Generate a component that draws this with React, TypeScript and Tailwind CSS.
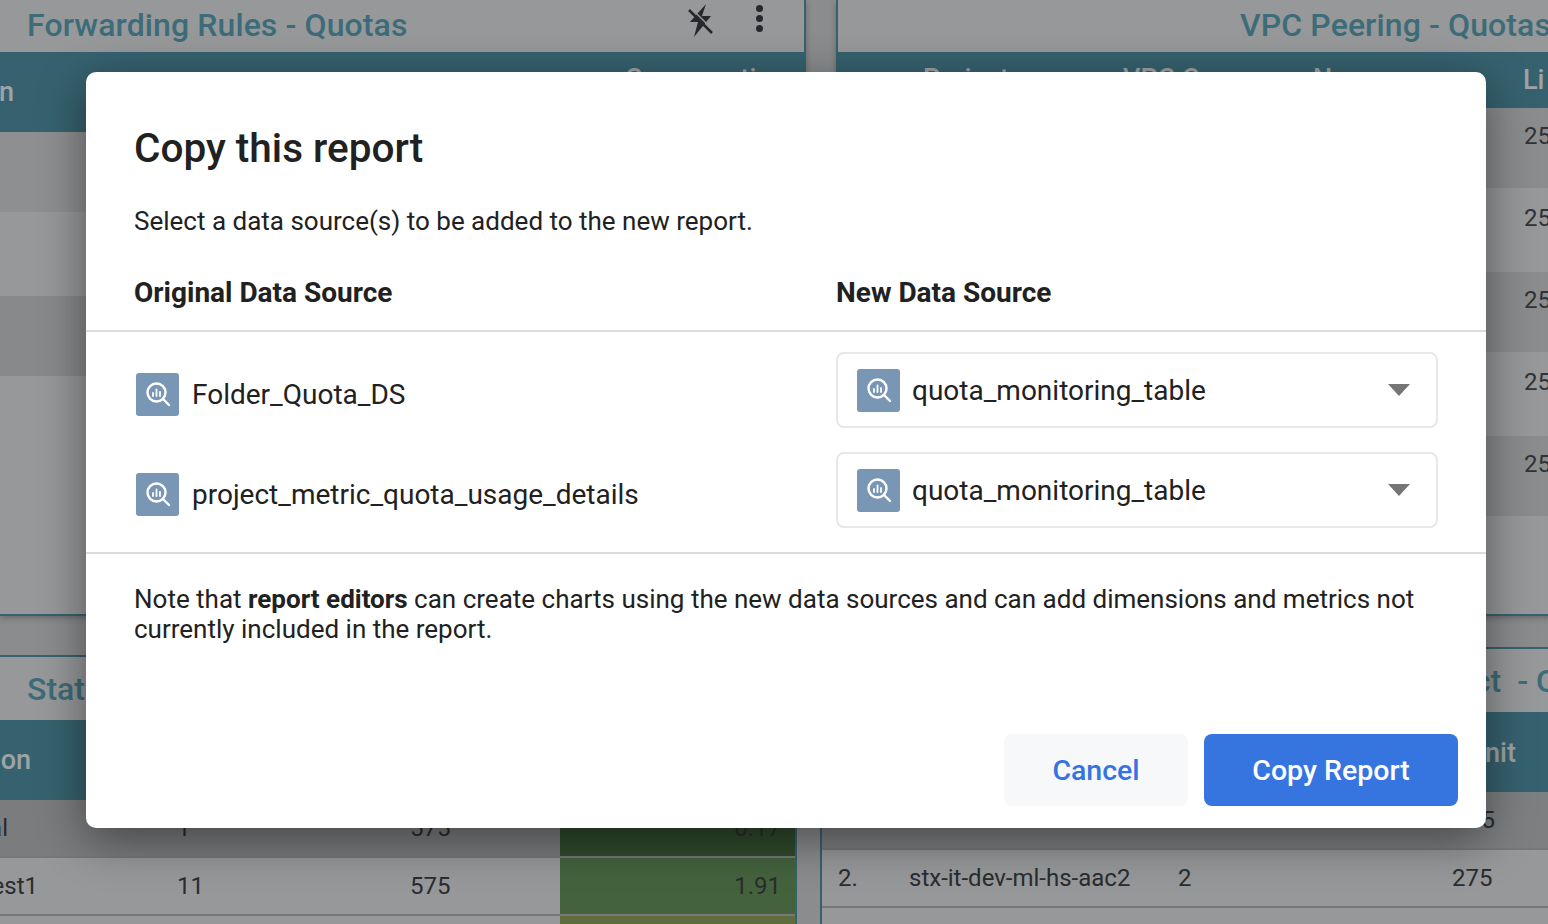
import React from 'react';

function SourceIcon() {
  return (
    <div className="flex h-[43px] w-[43px] shrink-0 items-center justify-center rounded-[3px] bg-[#7a96b5]">
      <svg width="30" height="30" viewBox="0 0 30 30" fill="none">
        <circle cx="13.5" cy="13.5" r="9" stroke="#fff" strokeWidth="2.4" />
        <path d="M20 20l6 6" stroke="#fff" strokeWidth="2.4" strokeLinecap="round" />
        <path d="M10 14v3M13.5 10.5v6.5M17 13v4" stroke="#fff" strokeWidth="1.8" strokeLinecap="round" />
      </svg>
    </div>
  );
}

function SourceSelect() {
  return (
    <div className="flex h-[76px] w-[602px] items-center rounded-[8px] border-2 border-[#e8e8e8] pl-[19px] pr-[26px]">
      <SourceIcon />
      <span className="ml-[12px] flex-1 pt-[2px] text-[28px] text-[#212121]">quota_monitoring_table</span>
      <svg width="22" height="12" viewBox="0 0 22 12">
        <path d="M0 0h22L11 12z" fill="#757575" />
      </svg>
    </div>
  );
}

function PinOffIcon() {
  return (
    <svg width="30" height="36" viewBox="0 0 30 36" fill="none">
      <path d="M20 1L16 13h9L8 34l4-15H4z" fill="#26282b" />
      <path d="M3 7l23 23" stroke="#26282b" strokeWidth="2.5" />
      <path d="M6 6l21 21" stroke="#98999b" strokeWidth="1.5" />
    </svg>
  );
}

function KebabIcon() {
  return (
    <div className="flex flex-col gap-[3px]">
      <div className="h-[7px] w-[7px] rounded-full bg-[#26282b]" />
      <div className="h-[7px] w-[7px] rounded-full bg-[#26282b]" />
      <div className="h-[7px] w-[7px] rounded-full bg-[#26282b]" />
    </div>
  );
}

function RightRow({ tall }: { tall?: boolean }) {
  return (
    <div className={`${tall ? 'h-[84px] bg-[#97989a] pt-[15px]' : 'h-[80px] bg-[#8b8c8e] pt-[13px]'} flex justify-end overflow-hidden`}>
      <span className="w-[27px] overflow-hidden text-[24px] leading-[30px] text-[#303236]">25</span>
    </div>
  );
}

export default function App() {
  return (
    <div className="relative flex h-[924px] w-[1548px] overflow-hidden bg-[#8b8c8e] font-['Roboto',sans-serif]">
      {/* Dimmed report behind the dialog */}
      <div className="flex w-[806px] shrink-0 flex-col">
        <div className="flex h-[616px] w-[806px] flex-col border-b-2 border-r-2 border-[#36626f] bg-[#97989a] shadow-[0_2px_6px_rgba(0,0,0,0.25)]">
          <div className="flex h-[52px] items-center pl-[27px] pr-[41px]">
            <span className="-mt-[2px] flex-1 text-[32px] font-medium tracking-[0.1px] text-[#3d6c79]">Forwarding Rules - Quotas</span>
            <div className="mr-[40px] -mt-[10px]"><PinOffIcon /></div>
            <div className="-mt-[16px]"><KebabIcon /></div>
          </div>
          <div className="relative h-[80px] bg-[#36626f] text-[27px] font-medium text-[#9fa3a5]">
            <div className="flex h-full w-[14px] items-center justify-end overflow-hidden">n</div>
            <span className="absolute left-[625px] top-[7px]">Consumption</span>
          </div>
          <div className="h-[80px] bg-[#8e8f91]" />
          <div className="h-[84px] bg-[#97989a]" />
          <div className="h-[80px] bg-[#88898b]" />
          <div className="flex-1 bg-[#97989a]" />
        </div>
        <div className="mt-[39px] flex flex-1 w-[797px] flex-col border-r-2 border-t-2 border-[#36626f] bg-[#97989a]">
          <div className="flex h-[63px] items-center pl-[27px] pt-[1px] text-[32px] font-medium text-[#3d6c79]">Statistics</div>
          <div className="flex h-[80px] items-center bg-[#36626f] text-[27px] font-medium text-[#9fa3a5]">
            <div className="w-[31px] overflow-hidden text-right">on</div>
          </div>
          <div className="flex h-[56px] items-center bg-[#7b7c7e] text-[24px] text-[#2a2c30]">
            <span className="w-[177px]"><span className="block w-[8px] overflow-hidden whitespace-nowrap [direction:rtl]">al</span></span>
            <span className="w-[233px]">1</span>
            <span className="w-[150px]">575</span>
            <span className="flex h-full flex-1 items-center justify-end bg-[#2f4a2c] pr-[14px]">0.17</span>
          </div>
          <div className="h-[2px] bg-[#77787a]" />
          <div className="flex h-[56px] items-center text-[24px] text-[#2a2c30]">
            <span className="w-[177px]"><span className="block w-[38px] overflow-hidden whitespace-nowrap [direction:rtl]">est1</span></span>
            <span className="w-[233px]">11</span>
            <span className="w-[150px]">575</span>
            <span className="flex h-full flex-1 items-center justify-end bg-[#44633d] pr-[14px]">1.91</span>
          </div>
          <div className="h-[2px] bg-[#77787a]" />
          <div className="flex flex-1">
            <div className="w-[560px]" />
            <div className="flex-1 bg-[#5f6c3e]" />
          </div>
        </div>
      </div>

      <div className="ml-[30px] flex flex-1 flex-col">
        <div className="flex h-[616px] flex-col border-b-2 border-l-2 border-[#36626f] bg-[#97989a] shadow-[0_2px_6px_rgba(0,0,0,0.25)]">
          <div className="flex h-[50px] items-center whitespace-nowrap pl-[402px] text-[32px] font-medium tracking-[0.1px] text-[#3d6c79]">VPC Peering - Quotas</div>
          <div className="mt-[2px] relative h-[56px] bg-[#36626f] text-[27px] font-medium text-[#9fa3a5]">
            <span className="absolute left-[85px] top-[7px]">Project</span>
            <span className="absolute left-[285px] top-[7px] whitespace-nowrap">VPC Consumer Name</span>
            <span className="absolute left-[685px] top-[8px]">Li</span>
          </div>
          <RightRow />
          <RightRow tall />
          <RightRow />
          <RightRow tall />
          <RightRow />
          <div className="flex-1 bg-[#97989a]" />
        </div>
        <div className="-ml-[16px] mt-[31px] flex flex-1 flex-col border-l-2 border-t-2 border-[#36626f] bg-[#97989a]">
          <div className="flex h-[63px] items-center justify-end whitespace-nowrap text-[32px] font-medium text-[#3d6c79]">
            <span className="-mr-[7px]">ct&nbsp;&nbsp;-&nbsp;Q</span>
          </div>
          <div className="relative h-[80px] bg-[#36626f] text-[27px] font-medium text-[#9fa3a5]">
            <span className="absolute left-[663px] top-[21px]">nit</span>
          </div>
          <div className="flex h-[56px] items-center justify-end bg-[#7e7f81] pr-[56px] text-[24px] text-[#2a2c30]">5</div>
          <div className="h-[2px] bg-[#77787a]" />
          <div className="flex h-[56px] items-center text-[24px] text-[#2a2c30]">
            <span className="ml-[16px] w-[71px]">2.</span>
            <span className="w-[269px]">stx-it-dev-ml-hs-aac2</span>
            <span className="w-[274px]">2</span>
            <span>275</span>
          </div>
          <div className="h-[2px] bg-[#77787a]" />
        </div>
      </div>

      {/* Copy report dialog */}
      <div className="absolute left-[86px] top-[72px] flex h-[756px] w-[1400px] flex-col rounded-[10px] bg-white text-[#212121] shadow-[0_12px_48px_rgba(0,0,0,0.45)]">
        <div className="flex h-[260px] flex-col border-b-2 border-[#dcdcdc] px-[48px]">
          <h1 className="mt-[52px] text-[40.5px] font-medium leading-[48px]">Copy this report</h1>
          <p className="mt-[34px] text-[26px] leading-[30px]">Select a data source(s) to be added to the new report.</p>
          <div className="mt-[41px] grid grid-cols-[702px_1fr] text-[28px] font-bold leading-[32px]">
            <span>Original Data Source</span>
            <span>New Data Source</span>
          </div>
        </div>

        <div className="flex h-[222px] flex-col gap-[24px] border-b-2 border-[#dcdcdc] pl-[50px] pt-[20px]">
          {['Folder_Quota_DS', 'project_metric_quota_usage_details'].map((name) => (
            <div key={name} className="grid h-[76px] grid-cols-[700px_1fr]">
              <div className="flex items-center pt-[8px]">
                <SourceIcon />
                <span className="ml-[13px] pt-[2px] text-[28px]">{name}</span>
              </div>
              <SourceSelect />
            </div>
          ))}
        </div>

        <p className="mt-[30px] px-[48px] text-[26px] leading-[30px]">
          Note that <b className="font-bold">report editors</b> can create charts using the new data sources and can add dimensions and metrics not currently included in the report.
        </p>

        <div className="mt-auto flex justify-end gap-[16px] pb-[22px] pr-[28px]">
          <button className="h-[72px] w-[184px] rounded-[8px] bg-[#f7f8fa] pt-[2px] text-[28.5px] font-medium text-[#3574e0]">Cancel</button>
          <button className="h-[72px] w-[254px] rounded-[8px] bg-[#3674e0] pt-[2px] text-[28.5px] font-medium text-white">Copy Report</button>
        </div>
      </div>
    </div>
  );
}
